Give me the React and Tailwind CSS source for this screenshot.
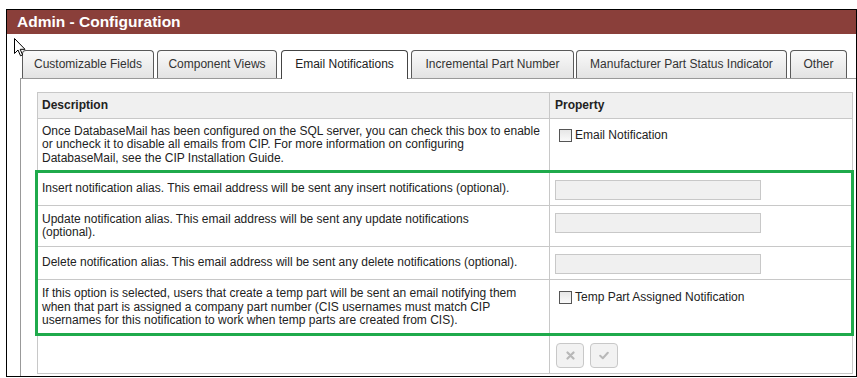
import React from "react";

const tabs = [
  { label: "Customizable Fields", w: "w-[132px]", ml: "ml-0" },
  { label: "Component Views", w: "w-[120px]", ml: "ml-[3px]" },
  { label: "Email Notifications", w: "w-[127px]", ml: "ml-[4px]", active: true },
  { label: "Incremental Part Number", w: "w-[163px]", ml: "ml-[3px]" },
  { label: "Manufacturer Part Status Indicator", w: "w-[211px]", ml: "ml-[2px]" },
  { label: "Other", w: "w-[57px]", ml: "ml-[3px]" },
];

const Checkbox = ({ label, top }) => (
  <div className={`flex items-center ${top}`}>
    <span className="ml-[4px] w-[13px] h-[13px] border border-[#555] bg-gradient-to-b from-[#e6e6e6] to-[#fafafa]"></span>
    <span className="ml-[3px]">{label}</span>
  </div>
);

const TextBox = ({ top }) => (
  <div className={`${top} w-[206px] h-[20px] border border-[#c8c8c8] bg-[#f0f0f0]`}></div>
);

const Row = ({ h, children, prop }) => (
  <div className={`flex border-t border-[#c8c8c8] ${h}`}>
    <div className="w-[512px] border-r border-[#c8c8c8] pl-[4px] flex items-center whitespace-nowrap">
      <div>{children}</div>
    </div>
    <div className="flex-1 pl-[5px]">{prop}</div>
  </div>
);

const Cursor = () => (
  <svg className="absolute left-[14px] top-[38px]" width="12" height="19" viewBox="0 0 12 19">
    <path
      d="M0.5 0.5 L0.5 15.5 L4 12 L6.5 17.8 L8.6 16.9 L6.2 11.3 L11 11.3 Z"
      fill="#fff"
      stroke="#000"
      strokeWidth="1"
    />
  </svg>
);

const App = () => {
  return (
    <div
      className="relative w-[857px] h-[378px] bg-white pl-[6px] pt-[9px] text-[#222]"
      style={{ fontFamily: '"Liberation Sans", Arial, sans-serif' }}
    >
      <div className="w-[851px] h-[368px] border border-black overflow-hidden">
        <div className="h-[24px] bg-[#8a3f3a] text-white font-bold text-[15.5px] leading-[24px] pl-[10px]">
          Admin - Configuration
        </div>

        <div className="pl-[13px] pt-[16px]">
          <div className="flex items-end h-[29px] pl-[2px] border-b border-[#999]">
            {tabs.map((t) =>
              t.active ? (
                <div
                  key={t.label}
                  className={`${t.w} ${t.ml} relative z-10 h-[29px] -mb-px bg-white border border-b-0 border-[#444] rounded-t-[4px] text-center text-[12px] leading-[27px] text-[#222]`}
                >
                  {t.label}
                </div>
              ) : (
                <div
                  key={t.label}
                  className={`${t.w} ${t.ml} h-[28px] bg-gradient-to-b from-[#fafafa] to-[#e3e3e3] border border-b-0 border-[#5a5a5a] rounded-t-[4px] text-center text-[12px] leading-[27px] text-[#333]`}
                >
                  {t.label}
                </div>
              )
            )}
          </div>

          <div className="h-[300px] border-l border-[#999] pl-[16px] pt-[13px]">
            <div className="relative w-[816px] border-l border-r border-b border-[#c8c8c8] text-[12px] leading-[13.5px]">
              <div className="flex h-[26px] border-t border-[#c8c8c8] bg-[#f0f0f0] font-bold">
                <div className="w-[512px] border-r border-[#c8c8c8] pl-[4px] flex items-center">Description</div>
                <div className="flex-1 pl-[5px] flex items-center">Property</div>
              </div>

              <Row h="h-[53px]" prop={<Checkbox label="Email Notification" top="mt-[10px]" />}>
                Once DatabaseMail has been configured on the SQL server, you can check this box to enable
                <br />
                or uncheck it to disable all emails from CIP. For more information on configuring
                <br />
                DatabaseMail, see the CIP Installation Guide.
              </Row>

              <Row h="h-[34px]" prop={<TextBox top="mt-[8px]" />}>
                Insert notification alias. This email address will be sent any insert notifications (optional).
              </Row>

              <Row h="h-[41px]" prop={<TextBox top="mt-[7px]" />}>
                Update notification alias. This email address will be sent any update notifications
                <br />
                (optional).
              </Row>

              <Row h="h-[33px]" prop={<TextBox top="mt-[7px]" />}>
                Delete notification alias. This email address will be sent any delete notifications (optional).
              </Row>

              <Row h="h-[56px]" prop={<Checkbox label="Temp Part Assigned Notification" top="mt-[11px]" />}>
                If this option is selected, users that create a temp part will be sent an email notifying them
                <br />
                when that part is assigned a company part number (CIS usernames must match CIP
                <br />
                usernames for this notification to work when temp parts are created from CIS).
              </Row>

              <Row
                h="h-[38px]"
                prop={
                  <div className="flex gap-[6px] mt-[7px] ml-px">
                    <button className="w-[28px] h-[25px] border border-[#c8c8c8] rounded-[4px] bg-[#f2f2f2] flex items-center justify-center">
                      <svg width="9" height="9" viewBox="0 0 9 9">
                        <path d="M1.5 1.5 L7.5 7.5 M7.5 1.5 L1.5 7.5" stroke="#b8b8b8" strokeWidth="2.2" strokeLinecap="round" />
                      </svg>
                    </button>
                    <button className="w-[28px] h-[25px] border border-[#c8c8c8] rounded-[4px] bg-[#f2f2f2] flex items-center justify-center">
                      <svg width="10" height="9" viewBox="0 0 10 9">
                        <path d="M1.2 4.8 L3.8 7.2 L8.8 1.8" fill="none" stroke="#b8b8b8" strokeWidth="2" strokeLinecap="round" strokeLinejoin="round" />
                      </svg>
                    </button>
                  </div>
                }
              >
                {""}
              </Row>

              <div className="absolute left-[-3px] top-[78px] w-[819px] h-[166px] border-[3px] border-[#1faa4b] pointer-events-none"></div>
            </div>
          </div>
        </div>
      </div>
      <Cursor />
    </div>
  );
};

export default App;
